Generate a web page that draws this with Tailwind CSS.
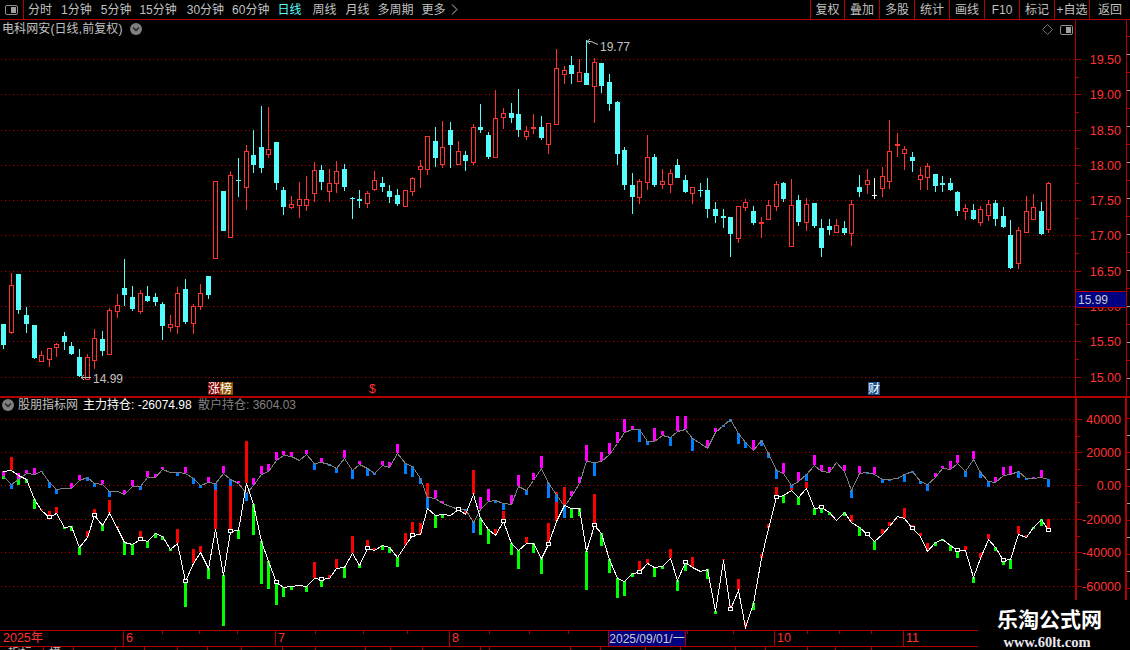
<!DOCTYPE html>
<html lang="zh-CN">
<head>
    <meta charset="UTF-8">
    <title>电科网安 日线</title>
    <script src="https://cdn.jsdelivr.net/npm/@tailwindcss/browser@4"></script>
</head>
<body class="relative w-[1130px] h-[650px] overflow-hidden bg-black text-[#c0c0c0] text-[12px] leading-none font-['Liberation_Sans','Noto_Sans_CJK_SC',sans-serif]">

    <!-- toolbar -->
    <div class="flex h-[20px] border-b border-[#b00000]">
        <div class="flex items-center justify-center w-[24px] border-r border-[#b00000]">
            <svg width="13" height="10" viewBox="0 0 13 10"><rect x="0.5" y="0.5" width="12" height="9" rx="1.5" fill="#000" stroke="#909090"/><rect x="6" y="2" width="5" height="6" fill="#a0a0a0"/></svg>
        </div>
        <div class="flex items-center gap-2 pl-[4px]">
            <span>分时</span>
            <span class="ml-px">1分钟</span>
            <span class="ml-px">5分钟</span>
            <span>15分钟</span>
            <span class="ml-0.5">30分钟</span>
            <span>60分钟</span>
            <span class="text-[#54fcfc]">日线</span>
            <span class="ml-[3px]">周线</span>
            <span class="ml-px">月线</span>
            <span>多周期</span>
            <span>更多</span>
            <svg class="-ml-[3px]" width="7" height="11" viewBox="0 0 7 11"><path d="M1 0.5 L6 5.5 L1 10.5" fill="none" stroke="#c0c0c0"/></svg>
        </div>
        <div class="ml-auto flex">
            <div class="flex items-center justify-center w-[34px] border-l border-[#b00000]">复权</div>
            <div class="flex items-center justify-center w-[35px] border-l border-[#b00000]">叠加</div>
            <div class="flex items-center justify-center w-[35px] border-l border-[#b00000]">多股</div>
            <div class="flex items-center justify-center w-[35px] border-l border-[#b00000]">统计</div>
            <div class="flex items-center justify-center w-[35px] border-l border-[#b00000]">画线</div>
            <div class="flex items-center justify-center w-[35px] border-l border-[#b00000]">F10</div>
            <div class="flex items-center justify-center w-[35px] border-l border-[#b00000]">标记</div>
            <div class="flex items-center justify-center w-[35px] border-l border-[#b00000]">+自选</div>
            <div class="flex items-center justify-center w-[41px] border-l border-[#b00000]">返回</div>
        </div>
    </div>

    <!-- price panel -->
    <div class="relative h-[376px]">
        <svg id="price" class="block" width="1130" height="376" viewBox="0 20 1130 376"></svg>
        <div class="absolute left-[2px] top-[3px] flex items-center gap-[7px] h-[12px]">
            <span class="tracking-[0.1px]">电科网安(日线,前复权)</span>
            <svg width="12" height="12" viewBox="0 0 12 12"><circle cx="6" cy="6" r="6" fill="#808080"/><path d="M3 4.5 L6 7.5 L9 4.5" fill="none" stroke="#222" stroke-width="1.5"/></svg>
        </div>
        <div class="absolute left-[1042px] top-[4px] flex items-center gap-[7px]">
            <svg width="11" height="11" viewBox="0 0 11 11"><path d="M5.5 0.5 L10.5 5.5 L5.5 10.5 L0.5 5.5 Z" fill="none" stroke="#707070"/></svg>
            <svg width="13" height="10" viewBox="0 0 13 10"><rect x="0.5" y="0.5" width="12" height="9" rx="1.5" fill="#000" stroke="#909090"/><rect x="6" y="2" width="5" height="6" fill="#a0a0a0"/></svg>
        </div>
        <div class="absolute left-[93px] top-[353px] text-[#c0c0c0]">14.99</div>
        <div class="absolute left-[600px] top-[21px] text-[#c0c0c0]">19.77</div>
        <div class="absolute left-[208px] top-[362px] flex h-[13px] text-white">
            <span class="w-[12px] bg-[#800000] flex items-center">涨</span>
            <span class="w-[13px] bg-[#8a5200] flex items-center">榜</span>
        </div>
        <div class="absolute left-[369px] top-[363px] text-[#ff3232]">$</div>
        <div class="absolute left-[868px] top-[362px] w-[12px] h-[13px] flex items-center bg-[#1d4f8a] text-white">财</div>
        <div class="absolute left-[1075px] top-[271px] w-[52px] h-[17px] flex items-center pl-[2px] bg-[#000080] border border-[#b00000] text-[#c8c8c8]">15.99</div>
    </div>

    <!-- panel divider -->
    <div class="h-[2px] bg-[#b00000]"></div>

    <!-- indicator panel -->
    <div class="relative h-[232px]">
        <svg id="indicator" class="block" width="1130" height="232" viewBox="0 398 1130 232"></svg>
        <div class="absolute left-[2px] top-[1px] flex items-center h-[12px]">
            <svg class="mr-[4px]" width="12" height="12" viewBox="0 0 12 12"><circle cx="6" cy="6" r="6" fill="#808080"/><path d="M3 4.5 L6 7.5 L9 4.5" fill="none" stroke="#222" stroke-width="1.5"/></svg>
            <span class="w-[65px]">股朋指标网</span>
            <span class="w-[115px] text-white">主力持仓: -26074.98</span>
            <span class="text-[#808080]">散户持仓: 3604.03</span>
        </div>
    </div>

    <!-- time axis -->
    <div class="relative flex w-[978px] h-[17px] border-y border-[#b00000] text-[#ff3232] text-[12.5px]">
        <div class="flex items-center w-[123px] pl-[3px]">2025年</div>
        <div class="flex items-center w-[152px] pl-[2px] border-l border-[#b00000]">6</div>
        <div class="flex items-center w-[174px] pl-[2px] border-l border-[#b00000]">7</div>
        <div class="flex items-center w-[159px] pl-[2px] border-l border-[#b00000]">8</div>
        <div class="flex items-center justify-center w-[78px] bg-[#000080] border-x border-[#b00000] text-[#c8c8c8] text-[12px]">2025/09/01/一</div>
        <div class="w-[88px]"></div>
        <div class="flex items-center w-[129px] pl-[2px] border-l border-[#b00000]">10</div>
        <div class="flex items-center w-[75px] pl-[2px] border-l border-[#b00000]">11</div>
        <svg id="timeticks" class="absolute left-0 top-0" width="978" height="3"></svg>
    </div>

    <!-- tabs, only their top edge is on screen -->
    <div class="relative flex h-[3px] w-[978px] overflow-hidden">
        <svg id="tabticks" class="absolute left-0 top-0" width="978" height="3"></svg>
        <span class="ml-[8px] w-[41px]">指标</span>
        <span>模</span>
    </div>

    <!-- watermark -->
    <div class="absolute left-[978px] top-[600px] w-[152px] h-[50px] bg-black flex flex-col items-center pt-[9px] pr-[9px]">
        <div class="text-[21px] font-bold text-white">乐淘公式网</div>
        <div class="mt-[5px] -ml-[5px] text-[14.5px] font-bold text-[#e8e8f0] font-['Liberation_Serif',serif]">www.60lt.com</div>
    </div>

    <script>
        const RED = "#ff3232", CYAN = "#54fcfc", AXIS = "#b00000", GRID = "#c00000";
        const xAt = (i) => Math.round(3.3 + 7.572 * i);
        const rect = (x, y, w, h, fill) => `<rect x="${x}" y="${y}" width="${w}" height="${h}" fill="${fill}"/>`;
        const text = (x, y, s) => `<text x="${x}" y="${y}" font-size="12.5" text-anchor="end" fill="${RED}">${s}</text>`;
        const dots = (y) => `<line x1="1" x2="1075" y1="${y + 0.5}" y2="${y + 0.5}" stroke="${GRID}" stroke-dasharray="1 3" shape-rendering="crispEdges"/>`;

        // [high, body top, body bottom, low], pixel rows
        const candles = [
            "c324,324,345,349","r273,285,332,334","c274,274,310,314","c307,315,324,333","c325,325,358,359","r351,355,361,361","r348,348,359,367","r343,344,347,357","c332,336,342,350","c342,346,354,355",
            "c349,357,376,377","r354,357,379,379","r329,338,360,369","c331,339,351,356","r308,310,354,354","r294,305,311,318","c259,288,295,306","c286,297,309,311","r290,293,311,314","c286,296,301,302",
            "c293,297,302,306","c302,304,326,340","r315,324,327,332","r287,293,326,334","c279,289,322,324","r304,306,323,334","r284,293,306,310","c276,276,295,299","r181,181,258,258","c191,191,231,231",
            "r171,175,237,237","c158,180,181,197","r145,151,187,210","c130,155,165,173","c106,147,168,173","r107,149,154,158","c142,142,183,190","c187,190,207,215","r196,204,207,209","r182,199,205,218",
            "r176,199,205,211","r162,170,193,202","c165,170,182,190","r169,183,191,202","r161,171,183,193","c164,169,187,191","c197,198,199,219","c190,199,201,208","r191,193,203,208","r171,180,189,191",
            "c177,183,187,192","c185,191,197,203","c189,195,204,206","r190,190,206,207","r177,178,191,196","r160,166,169,188","r136,136,169,175","c127,141,158,167","r121,147,164,168","c122,130,145,168",
            "r141,151,164,164","c151,155,161,171","r124,127,162,165","c104,127,130,133","c132,135,157,159","r90,118,157,157","r108,113,117,129","c103,113,118,123","c89,114,130,137","r126,131,136,140",
            "r114,127,129,134","c116,127,138,140","r123,123,144,154","r49,68,124,124","r66,70,74,84","c56,65,74,84","r59,72,81,81","c40,73,85,85","r58,62,86,123","c63,63,86,93",
            "c74,82,104,111","c101,102,154,165","c147,150,185,190","c173,185,197,214","r179,181,197,204","r135,157,182,190","c154,157,185,187","r169,181,184,189","r169,173,184,193","c159,165,178,178",
            "c175,180,192,193","r187,187,193,204","c183,190,191,197","c178,190,209,218","c202,209,216,223","c209,216,218,228","c217,217,234,257","r206,206,238,243","r199,202,207,211","c206,211,223,225",
            "r217,222,224,238","r200,205,219,220","r181,184,206,211","c182,183,199,202","r179,205,246,246","c195,200,222,226","r198,204,222,231","c203,203,226,228","c219,228,248,257","c219,226,230,235",
            "r219,225,232,232","c221,228,233,235","r200,204,233,246","c175,187,192,197","r169,180,184,194","w178,195,196,199","r167,176,188,197","r120,151,181,189","r133,144,146,157","r146,149,153,170",
            "c152,157,161,172","r167,175,179,190","r163,166,177,190","c174,174,186,192","c176,183,185,192","c178,183,190,191","c191,192,211,216","r204,208,211,220","c204,210,219,220","r206,209,222,226",
            "r200,204,215,221","c200,203,219,226","c207,216,227,228","c220,235,268,269","r227,230,263,269","r196,211,232,233","r194,207,219,220","c202,211,234,235","r182,183,229,233"
        ];

        let price = "";
        const priceRows = [[59,"19.50"],[94,"19.00"],[130,"18.50"],[165,"18.00"],[200,"17.50"],[235,"17.00"],[271,"16.50"],[306,"16.00"],[341,"15.50"],[377,"15.00"]];
        priceRows.forEach(([y, label], n) => {
            price += dots(y) + rect(1076, y, 5, 1, AXIS) + text(1121, y + 5, label);
            if (n < 9) price += rect(1076, Math.round((y + priceRows[n + 1][0]) / 2), 3, 1, AXIS);
        });
        price += rect(1075, 20, 1, 376, AXIS) + rect(1126, 20, 1, 376, AXIS);
        for (let y = 36; y < 396; y += 18) price += rect(1127, y, 3, 1, y % 4 ? "#a0a0a0" : AXIS);

        candles.forEach((c, i) => {
            const kind = c[0], [high, top, bottom, low] = c.slice(1).split(",").map(Number);
            const x = xAt(i), color = kind === "c" ? CYAN : kind === "w" ? "#ffffff" : RED;
            if (top > high) price += rect(x, high, 1, top - high, color);
            if (low > bottom) price += rect(x, bottom, 1, low - bottom, color);
            if (kind === "r" && bottom - top > 2) {
                price += `<rect x="${x - 1.5}" y="${top + 0.5}" width="4" height="${bottom - top}" fill="#000" stroke="${color}"/>`;
            } else {
                price += rect(x - 2, top, 5, Math.max(bottom - top, 1), color);
            }
        });

        // high/low markers
        price += `<path d="M81 377.5 H91 M81 377.5 L84 375 M81 377.5 L84 380" fill="none" stroke="#c0c0c0"/>`;
        price += `<path d="M587 41.5 L591 41.5 L598 44.5 M587 41.5 L590 39 M587 41.5 L590 44" fill="none" stroke="#c0c0c0"/>`;
        document.getElementById("price").innerHTML = price;

        // [line, bar end] in units of 1/3 px; first 46 sessions measured from y=380, rest from y=400
        const gray = [
            [288,273],[312,327],[298,280],[280,270],[282,264],[273,276],[306,324],[327,342],[324,324],[324,310],[300,285],[291,303],[309,321],[312,300],[333,351],[333,333],[342,330],[318,300],[318,330],[291,273],[291,282],[268,261],[276,276],[277,288],[279,261],[294,312],[315,324],[306,291],[309,330],[279,258],[297,318],[309,303],[339,363],[315,294],[282,258],[273,252],[240,216],[225,213],[228,216],[240,240],[222,210],[249,270],[246,234],[252,258],[264,279],[234,210],
            [210,237],[192,183],[204,228],[219,225],[196,183],[201,186],[160,132],[189,222],[198,231],[234,252],[291,327],[294,270],[309,303],[318,318],[326,326],[327,333],[365,399],[327,291],[303,267],[300,309],[309,330],[312,285],[258,225],[270,285],[240,219],[204,168],[249,294],[282,306],[318,354],[288,273],[249,231],[183,135],[186,228],[183,156],[162,129],[129,96],[96,57],[87,78],[87,126],[123,135],[123,84],[105,93],[111,138],[93,48],[87,48],[114,153],
            [130,130],[144,120],[96,84],[75,81],[57,66],[99,132],[126,144],[150,120],[120,138],[159,174],[210,237],[219,189],[255,264],[243,216],[222,243],[195,165],[213,195],[216,201],[186,186],[213,195],[270,294],[219,198],[216,222],[222,201],[237,249],[237,243],[234,237],[222,246],[213,219],[243,252],[252,273],[231,219],[204,198],[207,183],[189,165],[213,231],[177,153],[216,234],[243,261],[246,231],[225,201],[222,198],[213,234],[234,240],[234,231],[231,210],[237,261]
        ];
        const white = [
            [272,297],[270,231],[285,315],[297,309],[357,387],[390,387],[410,393],[398,381],[441,447],[438,453],[502,525],[471,453],[405,387],[436,453],[399,360],[444,438],[486,525],[492,525],[477,453],[483,504],[460,474],[468,480],[507,513],[489,447],[603,681],[549,507],[516,498],[564,597],[447,330],[585,738],[453,318],[450,477],[309,183],[372,465],[483,612],[543,627],[606,675],[621,651],[618,630],[615,615],[618,636],[594,546],[597,621],[594,585],[564,537],[561,594],
            [459,408],[495,504],[444,420],[450,444],[435,450],[441,459],[471,501],[435,399],[405,366],[402,369],[325,249],[345,384],[342,354],[345,345],[326,326],[342,333],[282,210],[354,405],[387,432],[405,387],[363,333],[429,465],[450,507],[429,411],[429,459],[474,522],[432,369],[363,276],[315,261],[324,354],[324,348],[453,570],[375,282],[399,438],[477,519],[534,594],[543,588],[519,531],[516,483],[489,477],[501,531],[498,507],[474,447],[540,573],[486,513],[501,471],
            [513,513],[507,537],[633,642],[480,477],[627,615],[570,537],[681,666],[609,630],[474,462],[384,372],[291,261],[285,309],[270,264],[291,315],[264,246],[324,345],[321,339],[336,345],[360,360],[336,348],[366,345],[381,408],[402,396],[423,450],[402,387],[378,366],[348,348],[354,324],[384,375],[408,399],[453,429],[426,438],[417,423],[435,453],[450,474],[450,438],[531,549],[474,459],[417,402],[441,453],[480,495],[477,507],[402,378],[411,405],[381,387],[357,378],[390,357]
        ];
        const yAt = (i, z) => Math.round((i < 46 ? 380 : 400) + z / 3);

        let ind = "";
        const indRows = [[419,"40000"],[452,"20000"],[485,"0.00"],[519,"-20000"],[552,"-40000"],[586,"-60000"]];
        indRows.forEach(([y, label], n) => {
            ind += dots(y) + rect(1077, y, 5, 1, AXIS) + text(1121, y + 5, label);
            if (n < 5) ind += rect(1077, Math.round((y + indRows[n + 1][0]) / 2), 3, 1, AXIS);
        });
        ind += rect(1075, 398, 2, 232, AXIS) + rect(1125, 398, 2, 232, AXIS);
        for (let y = 418; y < 600; y += 17) ind += rect(1127, y, 3, 1, y % 2 ? "#a0a0a0" : AXIS);

        const bars = (series, up, down) => series.map(([a, b], i) => {
            const y1 = yAt(i, a), y2 = yAt(i, b);
            return y1 === y2 ? "" : rect(xAt(i) - 1, Math.min(y1, y2), 3, Math.abs(y2 - y1), y2 < y1 ? up : down);
        }).join("");
        const line = (series, color) => `<polyline fill="none" stroke="${color}" shape-rendering="crispEdges" points="${series.map(([a], i) => `${xAt(i) + 0.5},${yAt(i, a) + 0.5}`).join(" ")}"/>`;

        ind += bars(white, "#ff0000", "#00ff00") + bars(gray, "#ff00ff", "#0080ff");
        ind += line(gray, "#808080") + line(white, "#ffffff");
        for (let i = 6; i < white.length; i += 6) {
            ind += `<rect x="${xAt(i) - 1.5}" y="${yAt(i, white[i][0]) - 1.5}" width="4" height="3" fill="#000" stroke="#fff"/>`;
        }
        document.getElementById("indicator").innerHTML = ind;

        document.getElementById("timeticks").innerHTML = [162,199,237,315,363,407,489,529,568,687,733,807,839,871]
            .map((x) => rect(x, 0, 1, 3, AXIS)).join("");
        document.getElementById("tabticks").innerHTML = [43,73,115,144,177,207,241,282,315,365,390,422,480,489,570,600,645,680,735,765,807,835,871]
            .map((x) => rect(x, 0, 1, 3, AXIS)).join("");
    </script>
</body>
</html>
